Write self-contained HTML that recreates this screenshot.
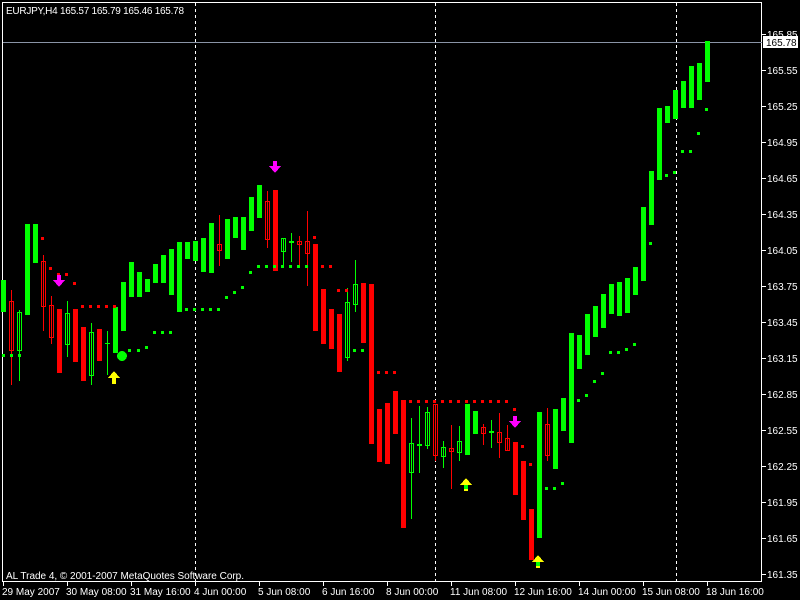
<!DOCTYPE html>
<html><head><meta charset="utf-8"><style>
html,body{margin:0;padding:0;background:#000;width:800px;height:600px;overflow:hidden}
svg{display:block}
text{font-family:"Liberation Sans",sans-serif;font-size:10px;fill:#fff}
.g{fill:#00ff00}.r{fill:#ff0000}
.hg{fill:none;stroke:#00ff00;stroke-width:1}
.hr{fill:none;stroke:#ff0000;stroke-width:1}
</style></head><body>
<svg width="800" height="600" viewBox="0 0 800 600" shape-rendering="crispEdges">
<rect width="800" height="600" fill="#000"/>
<rect x="2.5" y="2.5" width="759" height="579" fill="none" stroke="#fff"/>
<g stroke="#fff" stroke-dasharray="3,3"><line x1="195.5" y1="3" x2="195.5" y2="582"/><line x1="435.5" y1="3" x2="435.5" y2="582"/><line x1="676.5" y1="3" x2="676.5" y2="582"/></g>
<line x1="3" y1="42.5" x2="762" y2="42.5" stroke="#8a94a6"/>
<g>
<rect class="g" x="1" y="280" width="5" height="32"/>
<rect class="g" x="25" y="224" width="5" height="91"/>
<rect class="g" x="33" y="224" width="5" height="39"/>
<rect class="r" x="57" y="309" width="5" height="64"/>
<rect class="r" x="73" y="309" width="5" height="53"/>
<rect class="r" x="81" y="327" width="5" height="54"/>
<rect class="r" x="97" y="329" width="5" height="32"/>
<rect class="g" x="113" y="307" width="5" height="46"/>
<rect class="g" x="121" y="282" width="5" height="49"/>
<rect class="g" x="129" y="262" width="5" height="35"/>
<rect class="g" x="137" y="272" width="5" height="25"/>
<rect class="g" x="145" y="279" width="5" height="13"/>
<rect class="g" x="153" y="264" width="5" height="19"/>
<rect class="g" x="161" y="255" width="5" height="28"/>
<rect class="g" x="169" y="249" width="5" height="46"/>
<rect class="g" x="177" y="242" width="5" height="70"/>
<rect class="g" x="185" y="242" width="5" height="17"/>
<rect class="g" x="193" y="241" width="5" height="20"/>
<rect class="g" x="201" y="238" width="5" height="34"/>
<rect class="g" x="209" y="223" width="5" height="50"/>
<rect class="g" x="225" y="219" width="5" height="40"/>
<rect class="g" x="233" y="217" width="5" height="21"/>
<rect class="g" x="241" y="217" width="5" height="33"/>
<rect class="g" x="249" y="197" width="5" height="34"/>
<rect class="g" x="257" y="185" width="5" height="33"/>
<rect class="r" x="273" y="190" width="5" height="81"/>
<rect class="r" x="313" y="244" width="5" height="87"/>
<rect class="r" x="321" y="289" width="5" height="55"/>
<rect class="r" x="329" y="309" width="5" height="40"/>
<rect class="r" x="337" y="314" width="5" height="58"/>
<rect class="r" x="361" y="283" width="5" height="60"/>
<rect class="r" x="369" y="284" width="5" height="160"/>
<rect class="r" x="377" y="409" width="5" height="53"/>
<rect class="r" x="385" y="403" width="5" height="61"/>
<rect class="r" x="393" y="391" width="5" height="43"/>
<rect class="r" x="401" y="400" width="5" height="128"/>
<rect class="g" x="465" y="404" width="5" height="51"/>
<rect class="g" x="473" y="411" width="5" height="23"/>
<rect class="r" x="513" y="442" width="5" height="53"/>
<rect class="r" x="521" y="461" width="5" height="59"/>
<rect class="r" x="529" y="509" width="5" height="51"/>
<rect class="g" x="537" y="412" width="5" height="126"/>
<rect class="g" x="553" y="409" width="5" height="60"/>
<rect class="g" x="561" y="398" width="5" height="33"/>
<rect class="g" x="569" y="333" width="5" height="110"/>
<rect class="g" x="577" y="335" width="5" height="34"/>
<rect class="g" x="585" y="314" width="5" height="41"/>
<rect class="g" x="593" y="306" width="5" height="31"/>
<rect class="g" x="601" y="294" width="5" height="34"/>
<rect class="g" x="609" y="284" width="5" height="30"/>
<rect class="g" x="617" y="282" width="5" height="34"/>
<rect class="g" x="625" y="278" width="5" height="35"/>
<rect class="g" x="633" y="267" width="5" height="28"/>
<rect class="g" x="641" y="207" width="5" height="74"/>
<rect class="g" x="649" y="171" width="5" height="54"/>
<rect class="g" x="657" y="108" width="5" height="72"/>
<rect class="g" x="665" y="106" width="5" height="17"/>
<rect class="g" x="673" y="90" width="5" height="29"/>
<rect class="g" x="681" y="81" width="5" height="27"/>
<rect class="g" x="689" y="66" width="5" height="42"/>
<rect class="g" x="697" y="63" width="5" height="37"/>
<rect class="g" x="705" y="41" width="5" height="41"/>
</g>
<g>
<rect class="r" x="11" y="290" width="1" height="95"/><rect class="hr" x="9.5" y="301.5" width="4" height="49"/>
<rect class="g" x="19" y="310" width="1" height="71"/><rect class="hg" x="17.5" y="312.5" width="4" height="38"/>
<rect class="r" x="43" y="255" width="1" height="76"/><rect class="hr" x="41.5" y="261.5" width="4" height="45"/>
<rect class="r" x="51" y="296" width="1" height="48"/><rect class="hr" x="49.5" y="305.5" width="4" height="32"/>
<rect class="g" x="67" y="301" width="1" height="56"/><rect class="hg" x="65.5" y="313.5" width="4" height="31"/>
<rect class="g" x="91" y="323" width="1" height="62"/><rect class="hg" x="89.5" y="332.5" width="4" height="43"/>
<rect class="g" x="107" y="331" width="1" height="44"/><rect class="g" x="105" y="343" width="5" height="1"/>
<rect class="r" x="219" y="215" width="1" height="51"/><rect class="hr" x="217.5" y="244.5" width="4" height="6"/>
<rect class="r" x="267" y="191" width="1" height="57"/><rect class="hr" x="265.5" y="201.5" width="4" height="38"/>
<rect class="g" x="283" y="238" width="1" height="27"/><rect class="hg" x="281.5" y="238.5" width="4" height="13"/>
<rect class="g" x="291" y="233" width="1" height="29"/><rect class="g" x="289" y="241" width="5" height="2"/>
<rect class="r" x="299" y="236" width="1" height="29"/><rect class="hr" x="297.5" y="241.5" width="4" height="3"/>
<rect class="r" x="307" y="211" width="1" height="75"/><rect class="hr" x="305.5" y="241.5" width="4" height="12"/>
<rect class="g" x="347" y="288" width="1" height="73"/><rect class="hg" x="345.5" y="302.5" width="4" height="55"/>
<rect class="g" x="355" y="260" width="1" height="52"/><rect class="hg" x="353.5" y="284.5" width="4" height="20"/>
<rect class="g" x="411" y="418" width="1" height="101"/><rect class="hg" x="409.5" y="443.5" width="4" height="29"/>
<rect class="g" x="419" y="406" width="1" height="67"/><rect class="g" x="417" y="444" width="5" height="2"/>
<rect class="g" x="427" y="407" width="1" height="42"/><rect class="hg" x="425.5" y="412.5" width="4" height="33"/>
<rect class="r" x="435" y="404" width="1" height="57"/><rect class="hr" x="433.5" y="404.5" width="4" height="51"/>
<rect class="g" x="443" y="441" width="1" height="27"/><rect class="hg" x="441.5" y="447.5" width="4" height="9"/>
<rect class="r" x="451" y="425" width="1" height="64"/><rect class="hr" x="449.5" y="448.5" width="4" height="3"/>
<rect class="g" x="459" y="426" width="1" height="35"/><rect class="hg" x="457.5" y="441.5" width="4" height="11"/>
<rect class="r" x="483" y="424" width="1" height="21"/><rect class="hr" x="481.5" y="427.5" width="4" height="6"/>
<rect class="g" x="491" y="420" width="1" height="28"/><rect class="g" x="489" y="431" width="5" height="2"/>
<rect class="r" x="499" y="413" width="1" height="45"/><rect class="hr" x="497.5" y="432.5" width="4" height="10"/>
<rect class="r" x="507" y="425" width="1" height="26"/><rect class="hr" x="505.5" y="438.5" width="4" height="12"/>
<rect class="r" x="547" y="408" width="1" height="53"/><rect class="hr" x="545.5" y="424.5" width="4" height="31"/>
</g>
<g class="g">
<rect x="2" y="354" width="3" height="3"/><rect x="10" y="354" width="3" height="3"/><rect x="18" y="354" width="3" height="3"/>
<rect x="128" y="349" width="3" height="3"/><rect x="137" y="349" width="3" height="3"/><rect x="145" y="346" width="3" height="3"/>
<rect x="153" y="331" width="3" height="3"/><rect x="161" y="331" width="3" height="3"/><rect x="169" y="331" width="3" height="3"/>
<rect x="177" y="308" width="3" height="3"/><rect x="185" y="308" width="3" height="3"/><rect x="193" y="308" width="3" height="3"/><rect x="201" y="308" width="3" height="3"/><rect x="209" y="308" width="3" height="3"/><rect x="217" y="308" width="3" height="3"/>
<rect x="225" y="296" width="3" height="3"/><rect x="233" y="291" width="3" height="3"/><rect x="241" y="286" width="3" height="3"/><rect x="249" y="271" width="3" height="3"/>
<rect x="257" y="265" width="3" height="3"/><rect x="265" y="265" width="3" height="3"/><rect x="273" y="265" width="3" height="3"/><rect x="281" y="265" width="3" height="3"/><rect x="289" y="265" width="3" height="3"/><rect x="297" y="265" width="3" height="3"/><rect x="305" y="265" width="3" height="3"/>
<rect x="353" y="349" width="3" height="3"/><rect x="361" y="349" width="3" height="3"/>
<rect x="545" y="487" width="3" height="3"/><rect x="553" y="487" width="3" height="3"/><rect x="561" y="482" width="3" height="3"/>
<rect x="577" y="399" width="3" height="3"/><rect x="585" y="394" width="3" height="3"/><rect x="593" y="380" width="3" height="3"/><rect x="601" y="372" width="3" height="3"/>
<rect x="609" y="351" width="3" height="3"/><rect x="617" y="351" width="3" height="3"/><rect x="625" y="348" width="3" height="3"/><rect x="633" y="343" width="3" height="3"/>
<rect x="649" y="242" width="3" height="3"/><rect x="665" y="174" width="3" height="3"/><rect x="673" y="171" width="3" height="3"/>
<rect x="681" y="150" width="3" height="3"/><rect x="689" y="150" width="3" height="3"/><rect x="697" y="132" width="3" height="3"/><rect x="705" y="108" width="3" height="3"/>
<circle cx="122" cy="356" r="5"/>
</g>
<g class="r">
<rect x="41" y="237" width="3" height="3"/><rect x="49" y="267" width="3" height="3"/><rect x="57" y="273" width="3" height="3"/><rect x="65" y="273" width="3" height="3"/><rect x="73" y="282" width="3" height="3"/>
<rect x="81" y="305" width="3" height="3"/><rect x="89" y="305" width="3" height="3"/><rect x="97" y="305" width="3" height="3"/><rect x="105" y="305" width="3" height="3"/><rect x="113" y="305" width="3" height="3"/>
<rect x="313" y="236" width="3" height="3"/><rect x="321" y="265" width="3" height="3"/><rect x="329" y="265" width="3" height="3"/>
<rect x="337" y="289" width="3" height="3"/><rect x="345" y="289" width="3" height="3"/>
<rect x="377" y="371" width="3" height="3"/><rect x="385" y="371" width="3" height="3"/><rect x="393" y="371" width="3" height="3"/>
<rect x="401" y="400" width="3" height="3"/><rect x="409" y="400" width="3" height="3"/><rect x="417" y="400" width="3" height="3"/><rect x="425" y="400" width="3" height="3"/><rect x="433" y="400" width="3" height="3"/><rect x="441" y="400" width="3" height="3"/><rect x="449" y="400" width="3" height="3"/><rect x="457" y="400" width="3" height="3"/><rect x="465" y="400" width="3" height="3"/><rect x="473" y="400" width="3" height="3"/><rect x="481" y="400" width="3" height="3"/><rect x="489" y="400" width="3" height="3"/><rect x="497" y="400" width="3" height="3"/><rect x="505" y="400" width="3" height="3"/>
<rect x="513" y="408" width="3" height="3"/><rect x="521" y="445" width="3" height="3"/><rect x="529" y="463" width="3" height="3"/>
</g>
<g fill="#ff00ff">
<path d="M57 275h4v5h4l-6 7l-6-7h4z"/>
<path d="M273 161h4v5h4l-6 7l-6-7h4z"/>
<path d="M513 416h4v5h4l-6 7l-6-7h4z"/>
</g>
<path fill="#ffff00" d="M114 371l6 7h-4v6h-4v-6h-4z"/>
<path fill="#ffff00" d="M466 478l6 7h-4v6h-4v-6h-4z"/><rect x="464" y="485" width="4" height="4" fill="#00ff00"/>
<path fill="#ffff00" d="M538 555l6 7h-4v6h-4v-6h-4z"/><rect x="536" y="562" width="4" height="4" fill="#00ff00"/>
<g stroke="#fff">
<line x1="762" y1="34.5" x2="766" y2="34.5"/><line x1="762" y1="70.5" x2="766" y2="70.5"/><line x1="762" y1="106.5" x2="766" y2="106.5"/><line x1="762" y1="142.5" x2="766" y2="142.5"/><line x1="762" y1="178.5" x2="766" y2="178.5"/><line x1="762" y1="214.5" x2="766" y2="214.5"/><line x1="762" y1="250.5" x2="766" y2="250.5"/><line x1="762" y1="286.5" x2="766" y2="286.5"/><line x1="762" y1="322.5" x2="766" y2="322.5"/><line x1="762" y1="358.5" x2="766" y2="358.5"/><line x1="762" y1="394.5" x2="766" y2="394.5"/><line x1="762" y1="430.5" x2="766" y2="430.5"/><line x1="762" y1="466.5" x2="766" y2="466.5"/><line x1="762" y1="502.5" x2="766" y2="502.5"/><line x1="762" y1="538.5" x2="766" y2="538.5"/><line x1="762" y1="574.5" x2="766" y2="574.5"/>
<line x1="3.5" y1="582" x2="3.5" y2="586"/><line x1="67.5" y1="582" x2="67.5" y2="586"/><line x1="131.5" y1="582" x2="131.5" y2="586"/><line x1="195.5" y1="582" x2="195.5" y2="586"/><line x1="259.5" y1="582" x2="259.5" y2="586"/><line x1="323.5" y1="582" x2="323.5" y2="586"/><line x1="387.5" y1="582" x2="387.5" y2="586"/><line x1="451.5" y1="582" x2="451.5" y2="586"/><line x1="515.5" y1="582" x2="515.5" y2="586"/><line x1="579.5" y1="582" x2="579.5" y2="586"/><line x1="643.5" y1="582" x2="643.5" y2="586"/><line x1="707.5" y1="582" x2="707.5" y2="586"/>
</g>
<g>
<text x="767" y="38">165.85</text><text x="767" y="74">165.55</text><text x="767" y="110">165.25</text><text x="767" y="146">164.95</text><text x="767" y="182">164.65</text><text x="767" y="218">164.35</text><text x="767" y="254">164.05</text><text x="767" y="290">163.75</text><text x="767" y="326">163.45</text><text x="767" y="362">163.15</text><text x="767" y="398">162.85</text><text x="767" y="434">162.55</text><text x="767" y="470">162.25</text><text x="767" y="506">161.95</text><text x="767" y="542">161.65</text><text x="767" y="578">161.35</text>
</g>
<rect x="763" y="36" width="35" height="12" fill="#fff"/>
<text x="766" y="46" style="fill:#000">165.78</text>
<g>
<text x="2" y="595">29 May 2007</text><text x="66" y="595">30 May 08:00</text><text x="130" y="595">31 May 16:00</text><text x="194" y="595">4 Jun 00:00</text><text x="258" y="595">5 Jun 08:00</text><text x="322" y="595">6 Jun 16:00</text><text x="386" y="595">8 Jun 00:00</text><text x="450" y="595">11 Jun 08:00</text><text x="514" y="595">12 Jun 16:00</text><text x="578" y="595">14 Jun 00:00</text><text x="642" y="595">15 Jun 08:00</text><text x="706" y="595">18 Jun 16:00</text>
</g>
<text x="6" y="14" textLength="178">EURJPY,H4  165.57 165.79 165.46 165.78</text>
<text x="6" y="579" textLength="238">AL Trade 4, © 2001-2007 MetaQuotes Software Corp.</text>
</svg>
</body></html>
